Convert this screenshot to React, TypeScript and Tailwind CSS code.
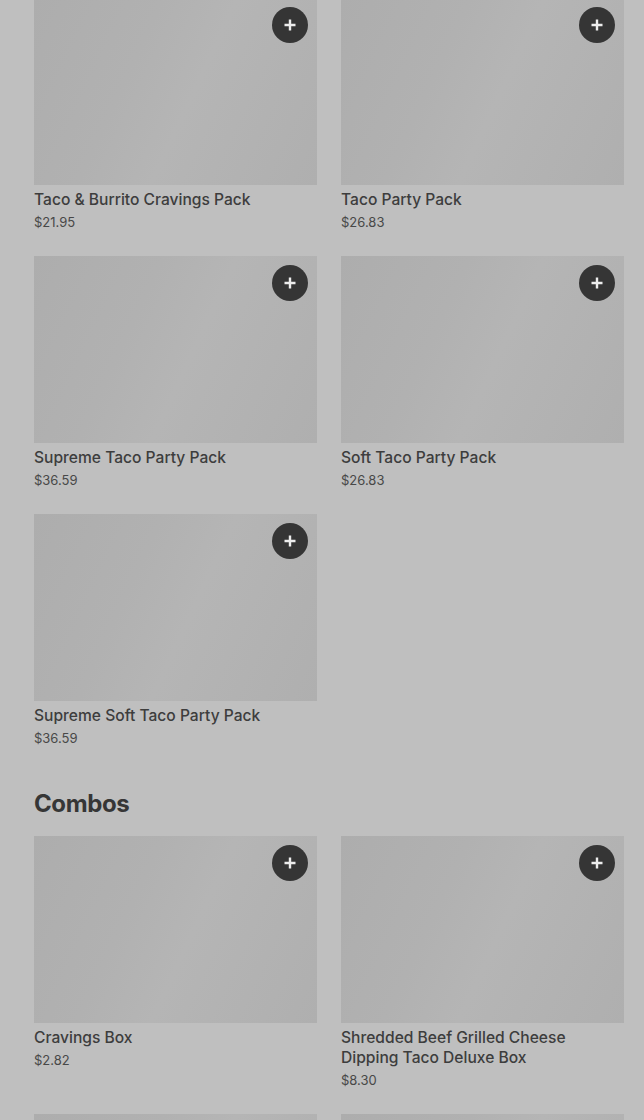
import React from 'react'

type Item = { name: string; price: string }

const packs: Item[] = [
  { name: 'Taco & Burrito Cravings Pack', price: '$21.95' },
  { name: 'Taco Party Pack', price: '$26.83' },
  { name: 'Supreme Taco Party Pack', price: '$36.59' },
  { name: 'Soft Taco Party Pack', price: '$26.83' },
  { name: 'Supreme Soft Taco Party Pack', price: '$36.59' },
]

const combos: Item[] = [
  { name: 'Cravings Box', price: '$2.82' },
  { name: 'Shredded Beef Grilled Cheese Dipping Taco Deluxe Box', price: '$8.30' },
  { name: 'Nachos BellGrande Combo', price: '$9.19' },
  { name: 'Crunchwrap Supreme Combo', price: '$9.49' },
]

const PlusIcon = () => (
  <svg width="14" height="14" viewBox="0 0 14 14" fill="none">
    <path d="M7 1.5v11M1.5 7h11" stroke="#ededed" strokeWidth="2.4" strokeLinecap="butt" />
  </svg>
)

const Card = ({ item }: { item: Item }) => (
  <div className="flex flex-col">
    <div className="relative h-[187px] bg-[linear-gradient(115deg,#adadad_0%,#b1b1b1_35%,#b5b5b5_55%,#afafaf_100%)]">
      <button className="absolute top-[9px] right-[9px] w-9 h-9 rounded-full bg-[#353535] flex items-center justify-center">
        <PlusIcon />
      </button>
    </div>
    <div className="mt-[5px] text-[15.6px] leading-[20px] font-medium text-[#3d3d3d]">
      {item.name}
    </div>
    <div className="mt-[2px] text-[13px] leading-[20px] text-[#484848]">{item.price}</div>
  </div>
)

export default function App() {
  return (
    <div
      className="min-h-screen bg-[#bfbfbf] overflow-hidden"
      style={{ fontFamily: 'Inter, "Liberation Sans", sans-serif' }}
    >
      <div className="-mt-[2px] pl-[34px] pr-[20px]">
        <div className="grid grid-cols-2 gap-x-6 gap-y-6">
          {packs.map((p) => (
            <Card key={p.name} item={p} />
          ))}
        </div>

        <h2 className="mt-10 mb-4 text-[24px] leading-8 font-bold text-[#363636] tracking-[-0.4px]">
          Combos
        </h2>

        <div className="grid grid-cols-2 gap-x-6 gap-y-6">
          {combos.map((c) => (
            <Card key={c.name} item={c} />
          ))}
        </div>
      </div>
    </div>
  )
}
